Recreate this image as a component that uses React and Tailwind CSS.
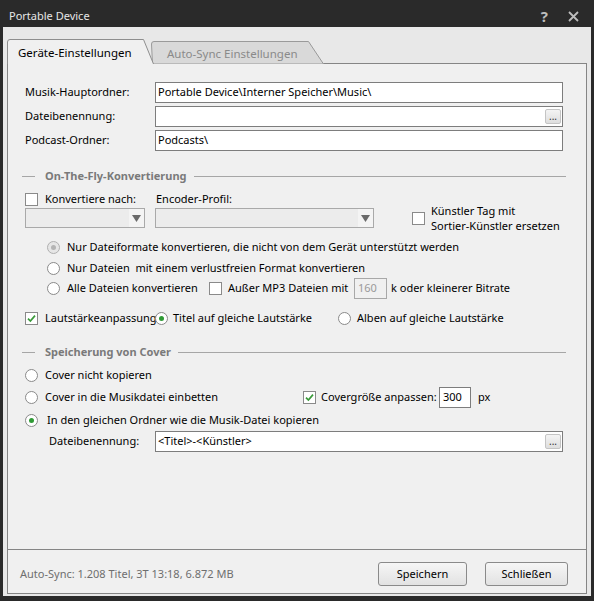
import React from 'react';

const Checkbox = ({ checked }) => (
    <span className="w-[13px] h-[13px] shrink-0 border border-[#8a8a8a] bg-white flex items-center justify-center">
        {checked && (
            <svg width="9" height="9" viewBox="0 0 9 9">
                <path d="M1 4.6 L3.4 7 L8 1.6" fill="none" stroke="#3a9a3a" strokeWidth="1.7" />
            </svg>
        )}
    </span>
);

const Radio = ({ checked, disabled }) => (
    <span
        className={
            disabled
                ? 'w-[13px] h-[13px] shrink-0 rounded-full border border-[#b0b0b0] bg-[#e6e6e6] flex items-center justify-center'
                : 'w-[13px] h-[13px] shrink-0 rounded-full border border-[#8a8a8a] bg-white flex items-center justify-center'
        }
    >
        {checked && (
            <span className={disabled ? 'w-[5px] h-[5px] rounded-full bg-[#b4b4b4]' : 'w-[5px] h-[5px] rounded-full bg-[#2f9a35]'} />
        )}
    </span>
);

const DotsButton = () => (
    <span className="w-[16px] h-[15px] mr-[1px] shrink-0 border border-[#c4c4c4] rounded-[2px] bg-gradient-to-b from-[#f4f4f4] to-[#dedede] flex items-end justify-center text-[10px] leading-[10px] text-[#333] pb-[2px]">
        ...
    </span>
);

const TextBox = ({ value, dots, className = '' }) => (
    <div className={`h-[21px] border border-[#7d7d7d] bg-white flex items-center pl-[2px] ${className}`}>
        <span className="flex-1 truncate">{value}</span>
        {dots && <DotsButton />}
    </div>
);

const Dropdown = ({ className = '' }) => (
    <div className={`h-[20px] border border-[#a9a9a9] bg-[#ececec] flex justify-end ${className}`}>
        <span className="w-[15px] h-full bg-[#f4f4f4] flex items-center justify-center">
            <svg width="9" height="7" viewBox="0 0 9 7">
                <path d="M0 0 L9 0 L4.5 7 Z" fill="#6a6a6a" />
            </svg>
        </span>
    </div>
);

const GroupHeader = ({ title }) => (
    <div className="h-[16px] flex items-center pl-[14px] pr-[20px]">
        <span className="w-[13px] h-px bg-[#a6a6a6]" />
        <span className="ml-[10px] mr-[7px] font-bold text-[#7a7a7a]">{title}</span>
        <span className="flex-1 h-px bg-[#a6a6a6]" />
    </div>
);

const FieldRow = ({ label, value, dots, className = '' }) => (
    <div className={`flex items-center h-[21px] ${className}`}>
        <span className="w-[130px] shrink-0">{label}</span>
        <TextBox value={value} dots={dots} className="w-[408px]" />
    </div>
);

const App = () => {
    return (
        <div className="w-[594px] h-[601px] bg-[#2a2a2a] flex flex-col px-[3px] pb-[5px] font-['Noto_Sans',sans-serif] text-[11px] text-black whitespace-nowrap overflow-hidden">
            {/* title bar */}
            <div className="h-[27px] shrink-0 flex items-center pl-[6px] pr-[12px] pt-[5px] text-[#e6e6e6]">
                <span className="flex-1">Portable Device</span>
                <span className="font-bold text-[15px] text-[#bdbdbd] mr-[20px] leading-none">?</span>
                <svg width="11" height="11" viewBox="0 0 11 11">
                    <path d="M1 1 L10 10 M10 1 L1 10" stroke="#bdbdbd" strokeWidth="1.8" />
                </svg>
            </div>

            <div className="flex-1 bg-[#e8e8e8] flex flex-col px-[4px] pt-[13px] pb-[2px]">
                {/* tabs */}
                <div className="flex items-end h-[24px] -mb-px relative">
                    <div className="relative z-10 w-[147px] h-[25px] flex items-center pl-[11px] pt-[3px] text-[11.5px]">
                        <svg className="absolute inset-0" width="147" height="25" viewBox="0 0 147 25">
                            <path d="M0.5 25 L0.5 3 Q0.5 0.5 3 0.5 L136.5 0.5 L146.5 25 Z" fill="#f0f0f0" />
                            <path d="M0.5 25 L0.5 3 Q0.5 0.5 3 0.5 L136.5 0.5 L146.5 25" fill="none" stroke="#8e8e8e" />
                        </svg>
                        <span className="relative">Geräte-Einstellungen</span>
                    </div>
                    <div className="relative -ml-[3px] w-[173px] h-[23px] flex items-center pl-[16px] pt-[2px] text-[#8a8a8a] text-[11.5px]">
                        <svg className="absolute inset-0" width="173" height="23" viewBox="0 0 173 23">
                            <path d="M1.5 23 L0.5 3 Q0.5 0.5 3 0.5 L157.5 0.5 L172.5 23 Z" fill="#d9d9d9" stroke="#9a9a9a" />
                        </svg>
                        <span className="relative">Auto-Sync Einstellungen</span>
                    </div>
                </div>

                {/* panel */}
                <div className="flex-1 border border-[#858585] bg-[#f0f0f0] flex flex-col">
                    <div className="flex-1 flex flex-col pl-[17px] pt-[18px]">
                        <FieldRow label="Musik-Hauptordner:" value="Portable Device\Interner Speicher\Music\" />
                        <FieldRow label="Dateibenennung:" value="" dots className="mt-[3px]" />
                        <FieldRow label="Podcast-Ordner:" value="Podcasts\" className="mt-[3px]" />

                        <div className="-ml-[17px] mt-[17px]">
                            <GroupHeader title="On-The-Fly-Konvertierung" />
                        </div>

                        <div className="flex items-center h-[16px] mt-[7px]">
                            <Checkbox />
                            <span className="ml-[7px] w-[111px]">Konvertiere nach:</span>
                            <span>Encoder-Profil:</span>
                        </div>

                        <div className="flex items-start h-[20px] mt-[1px]">
                            <Dropdown className="w-[120px]" />
                            <Dropdown className="w-[219px] ml-[10px]" />
                            <div className="flex items-center ml-[38px] -mt-[5px] leading-[15px]">
                                <Checkbox />
                                <div className="ml-[6px] flex flex-col">
                                    <span>Künstler Tag mit</span>
                                    <span>Sortier-Künstler ersetzen</span>
                                </div>
                            </div>
                        </div>

                        <div className="pl-[22px] mt-[9px] flex flex-col">
                            <div className="flex items-center h-[21px]">
                                <Radio checked disabled />
                                <span className="ml-[7px]">Nur Dateiformate konvertieren, die nicht von dem Gerät unterstützt werden</span>
                            </div>
                            <div className="flex items-center h-[21px]">
                                <Radio />
                                <span className="ml-[7px]">Nur Dateien&nbsp; mit einem verlustfreien Format konvertieren</span>
                            </div>
                            <div className="flex items-center h-[21px] -mt-[1px]">
                                <Radio />
                                <span className="ml-[7px] w-[142px]">Alle Dateien konvertieren</span>
                                <Checkbox />
                                <span className="ml-[6px] w-[126px]">Außer MP3 Dateien mit</span>
                                <div className="w-[33px] h-[21px] border border-[#a8a8a8] bg-[#f0f0f0] text-[#9a9a9a] flex items-center pl-[3px]">160</div>
                                <span className="ml-[4px]">k oder kleinerer Bitrate</span>
                            </div>
                        </div>

                        <div className="flex items-center h-[21px] mt-[9px]">
                            <Checkbox checked />
                            <span className="ml-[7px] w-[110px]">Lautstärkeanpassung</span>
                            <Radio checked />
                            <span className="ml-[5px] w-[165px]">Titel auf gleiche Lautstärke</span>
                            <Radio />
                            <span className="ml-[6px]">Alben auf gleiche Lautstärke</span>
                        </div>

                        <div className="-ml-[17px] mt-[15px]">
                            <GroupHeader title="Speicherung von Cover" />
                        </div>

                        <div className="flex items-center h-[22px] mt-[4px]">
                            <Radio />
                            <span className="ml-[7px]">Cover nicht kopieren</span>
                        </div>
                        <div className="flex items-center h-[22px]">
                            <Radio />
                            <span className="ml-[7px] w-[258px]">Cover in die Musikdatei einbetten</span>
                            <Checkbox checked />
                            <span className="ml-[5px] w-[118px]">Covergröße anpassen:</span>
                            <div className="w-[32px] h-[21px] border border-[#7d7d7d] bg-white flex items-center pl-[3px]">300</div>
                            <span className="ml-[7px]">px</span>
                        </div>
                        <div className="flex items-center h-[22px] mt-[1px]">
                            <Radio checked />
                            <span className="ml-[9px]">In den gleichen Ordner wie die Musik-Datei kopieren</span>
                        </div>
                        <div className="flex items-center h-[21px] pl-[24px]">
                            <span className="w-[106px] shrink-0">Dateibenennung:</span>
                            <TextBox value="<Titel>-<Künstler>" dots className="w-[408px]" />
                        </div>
                    </div>

                    {/* footer */}
                    <div className="h-[44px] shrink-0 border-t border-[#858585] flex items-center pt-[5px] pl-[12px] pr-[18px]">
                        <span className="flex-1 text-[#6e6e6e]">Auto-Sync: 1.208 Titel, 3T 13:18, 6.872 MB</span>
                        <button className="w-[89px] h-[24px] border border-[#8a8a8a] rounded-[3px] bg-gradient-to-b from-[#f6f6f6] to-[#e2e2e2]">Speichern</button>
                        <button className="w-[83px] h-[24px] ml-[18px] border border-[#8a8a8a] rounded-[3px] bg-gradient-to-b from-[#f6f6f6] to-[#e2e2e2]">Schließen</button>
                    </div>
                </div>
            </div>
        </div>
    );
};

export default App;
